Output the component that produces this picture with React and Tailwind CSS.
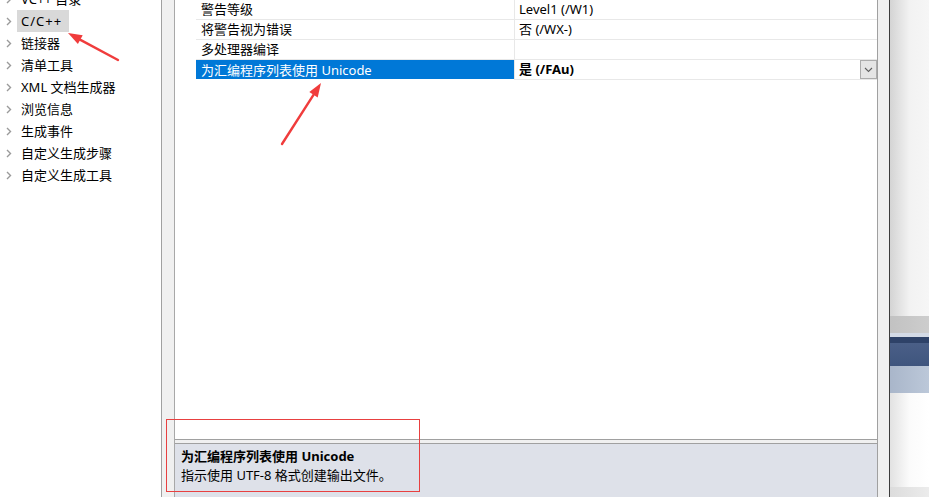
import React from "react";

const FONT = { fontFamily: "'Noto Sans','Noto Sans CJK SC',sans-serif" };

function Chevron() {
  return (
    <svg width="6" height="9" viewBox="0 0 6 9" className="shrink-0">
      <path d="M1 1 L4.5 4.5 L1 8" fill="none" stroke="#9a9a9a" strokeWidth="1.4" />
    </svg>
  );
}

const treeItems = [
  "VC++ 目录",
  "C/C++",
  "链接器",
  "清单工具",
  "XML 文档生成器",
  "浏览信息",
  "生成事件",
  "自定义生成步骤",
  "自定义生成工具",
];

const rows = [
  { name: "警告等级", value: "Level1 (/W1)" },
  { name: "将警告视为错误", value: "否 (/WX-)" },
  { name: "多处理器编译", value: "" },
  { name: "为汇编程序列表使用 Unicode", value: "是 (/FAu)", selected: true },
];

export default function App() {
  return (
    <div
      className="relative flex h-[497px] w-[929px] overflow-hidden bg-white text-[13px] text-black"
      style={FONT}
    >
      {/* Tree */}
      <div className="w-[161px] shrink-0 bg-white">
        <div className="-mt-[12px] flex flex-col">
          {treeItems.map((t, i) => (
            <div key={t} className="flex h-[22px] items-center">
              <div className="flex w-[17px] justify-center pl-[1px] pt-[1px]">
                <Chevron />
              </div>
              <div
                className={
                  i === 1
                    ? "flex h-[22px] w-[52px] items-center bg-[#d9d9d9] pl-[4px] pt-[2px] tracking-[1px]"
                    : "flex h-[22px] items-center pl-[4px] pt-[2px]"
                }
              >
                {t}
              </div>
            </div>
          ))}
        </div>
      </div>
      <div className="w-px shrink-0 bg-[#a0a0a0]" />
      <div className="w-[12px] shrink-0 bg-[#f0f0f0]" />
      <div className="w-px shrink-0 bg-[#a8a8a8]" />

      {/* Grid + description */}
      <div className="flex w-[702px] shrink-0 flex-col">
        <div className="flex h-[439px] flex-col bg-white">
          {rows.map((r) => (
            <div key={r.name} className="flex h-[20px]">
              <div className="w-[21px] shrink-0 bg-white" />
              <div
                className={
                  r.selected
                    ? "flex h-[19px] w-[318px] shrink-0 items-center bg-[#0078d7] pl-[5px] pt-[2px] text-white"
                    : "flex h-[20px] w-[318px] shrink-0 items-center border-b border-[#e8e8e8] pl-[5px] pt-[1px]"
                }
              >
                {r.name}
              </div>
              <div className="w-px shrink-0 bg-[#e8e8e8]" />
              <div className="flex h-[20px] flex-1 items-center border-b border-[#e8e8e8] pl-[4px]">
                <span className={r.selected ? "flex-1 pt-[1px] font-bold" : "flex-1 pt-[1px]"}>{r.value}</span>
                {r.selected && (
                  <div className="flex h-[19px] w-[17px] items-center justify-center border border-[#acacac] bg-[#e5e5e5]">
                    <svg width="9" height="6" viewBox="0 0 9 6">
                      <path d="M1 1 L4.5 4.5 L8 1" fill="none" stroke="#606060" strokeWidth="1.1" />
                    </svg>
                  </div>
                )}
              </div>
            </div>
          ))}
        </div>
        <div className="h-px bg-[#a0a0a0]" />
        <div className="h-[3px] bg-[#f0f0f0]" />
        <div className="h-px bg-[#a0a0a0]" />
        <div className="flex flex-1 flex-col bg-[#dee1e9] pl-[6px] pt-[3px]">
          <div className="h-[19px] font-bold leading-[19px]">为汇编程序列表使用 Unicode</div>
          <div className="h-[19px] leading-[19px]">指示使用 UTF-8 格式创建输出文件。</div>
        </div>
      </div>

      <div className="w-px shrink-0 bg-[#a0a0a0]" />
      <div className="w-[11px] shrink-0 bg-[#f0f0f0]" />
      <div className="w-px shrink-0 bg-[#3c3c3c]" />

      {/* Right side window edge */}
      <div className="flex flex-1 flex-col">
        <div className="h-[316px] bg-gradient-to-r from-[#d4d4d4] via-[#f2f2f2] to-[#f6f6f6]" />
        <div className="h-[17px] bg-gradient-to-r from-[#c2c2c2] to-[#cdcdcd]" />
        <div className="h-[4px] bg-[#d3dae6]" />
        <div className="h-[6px] bg-[#2e4268]" />
        <div className="h-[23px] bg-gradient-to-b from-[#4a5f87] to-[#3f557e]" />
        <div className="h-[27px] bg-gradient-to-r from-[#a9b6ca] to-[#bcc8d9]" />
        <div className="h-[94px] bg-gradient-to-r from-[#e2e2e2] via-[#fbfbfb] to-white" />
        <div className="flex-1 bg-gradient-to-r from-[#dcdcdc] to-[#ececec]" />
      </div>

      {/* Annotations */}
      <div className="pointer-events-none absolute left-[166px] top-[419px] h-[73px] w-[254px] border border-[#e84040]" />
      <svg className="pointer-events-none absolute left-0 top-0" width="929" height="497">
        <line x1="118" y1="60" x2="80" y2="39.6" stroke="#f03c3c" strokeWidth="2.4" strokeLinecap="round" />
        <polygon points="68,33 82.7,35.3 77.9,44.1" fill="#f03c3c" />
        <line x1="282" y1="144" x2="313.5" y2="94.8" stroke="#f03c3c" strokeWidth="2.4" strokeLinecap="round" />
        <polygon points="321,83 317.7,97.5 309.3,92.1" fill="#f03c3c" />
      </svg>
    </div>
  );
}
